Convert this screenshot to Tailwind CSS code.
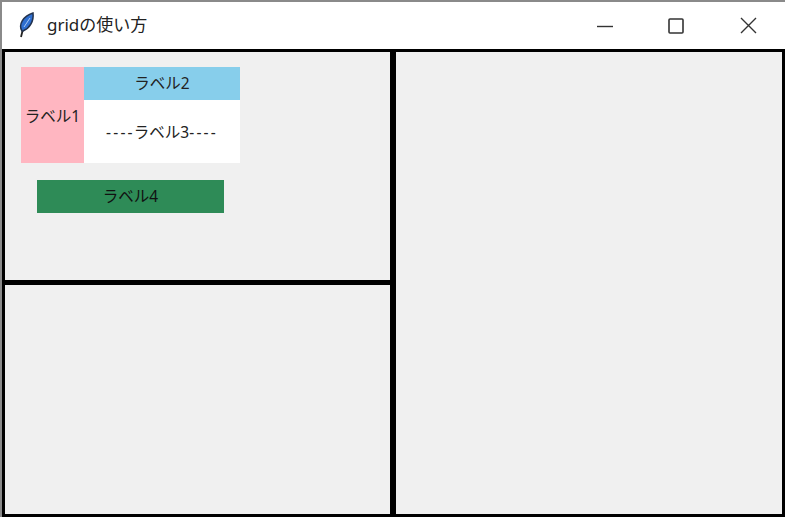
<!DOCTYPE html>
<html lang="ja">
<head>
  <meta charset="UTF-8">
  <title>gridの使い方</title>
  <script src="https://cdn.jsdelivr.net/npm/@tailwindcss/browser@4"></script>
</head>
<body class="w-[785px] h-[517px] overflow-hidden bg-white font-['Noto_Sans','Noto_Sans_CJK_JP',sans-serif] text-[15.5px] text-[#222]">
  <div class="h-full flex flex-col border-t-2 border-l-2 border-[#8a8a8a]">
    <!-- title bar -->
    <div class="h-[47px] flex items-center bg-white shrink-0">
      <svg class="ml-[16px] w-[17px] h-[27px]" viewBox="0 0 17 27">
        <path d="M3 25 L5 17" stroke="#222" stroke-width="1.8" fill="none"/>
        <path d="M4 19 C0 13 5 4 15 1 C16 9 12 16 5 19 Z" fill="#2f6fd0" stroke="#23324d" stroke-width="1.5"/>
        <path d="M6 15 L12 6" stroke="#a9c8f2" stroke-width="1"/>
      </svg>
      <span class="ml-[12px] pb-[2px] text-[17px] leading-none">gridの使い方</span>
      <div class="ml-auto flex items-center">
        <svg class="w-[16px] h-[16px] mr-[55px]" viewBox="0 0 16 16"><path d="M0 8.5 H16" stroke="#333" stroke-width="1.4"/></svg>
        <svg class="w-[16px] h-[16px] mr-[56px]" viewBox="0 0 16 16"><rect x="1" y="1" width="14" height="14" rx="1" fill="none" stroke="#333" stroke-width="1.6"/></svg>
        <svg class="w-[17px] h-[17px] mr-[28px]" viewBox="0 0 17 17"><path d="M1 1 L16 16 M16 1 L1 16" stroke="#333" stroke-width="1.4"/></svg>
      </div>
    </div>
    <!-- panes -->
    <div class="flex-1 min-h-0 bg-black p-[3px] grid grid-cols-[385px_386px] grid-rows-[228px_229px] gap-x-[6px] gap-y-[5px]">
      <div class="bg-[#f0f0f0] pt-[15px] pl-[16px]">
        <div class="grid grid-cols-[63px_156px] grid-rows-[33px_63px] w-[219px]">
          <div class="row-span-2 bg-[#ffb6c1] flex items-center justify-center pt-[3px] whitespace-nowrap">ラベル1</div>
          <div class="bg-[#87ceeb] flex items-center justify-center pt-[1px]">ラベル2</div>
          <div class="bg-white flex items-center justify-center pt-[3px] whitespace-nowrap"><span class="tracking-[2.2px] mr-[-1px]">----</span>ラベル3<span class="tracking-[2.2px]">----</span></div>
        </div>
        <div class="mt-[17px] ml-[16px] w-[187px] h-[33px] bg-[#2e8b57] flex items-center justify-center text-[#111]">ラベル4</div>
      </div>
      <div class="row-span-2 bg-[#f0f0f0]"></div>
      <div class="bg-[#f0f0f0]"></div>
    </div>
  </div>
</body>
</html>
